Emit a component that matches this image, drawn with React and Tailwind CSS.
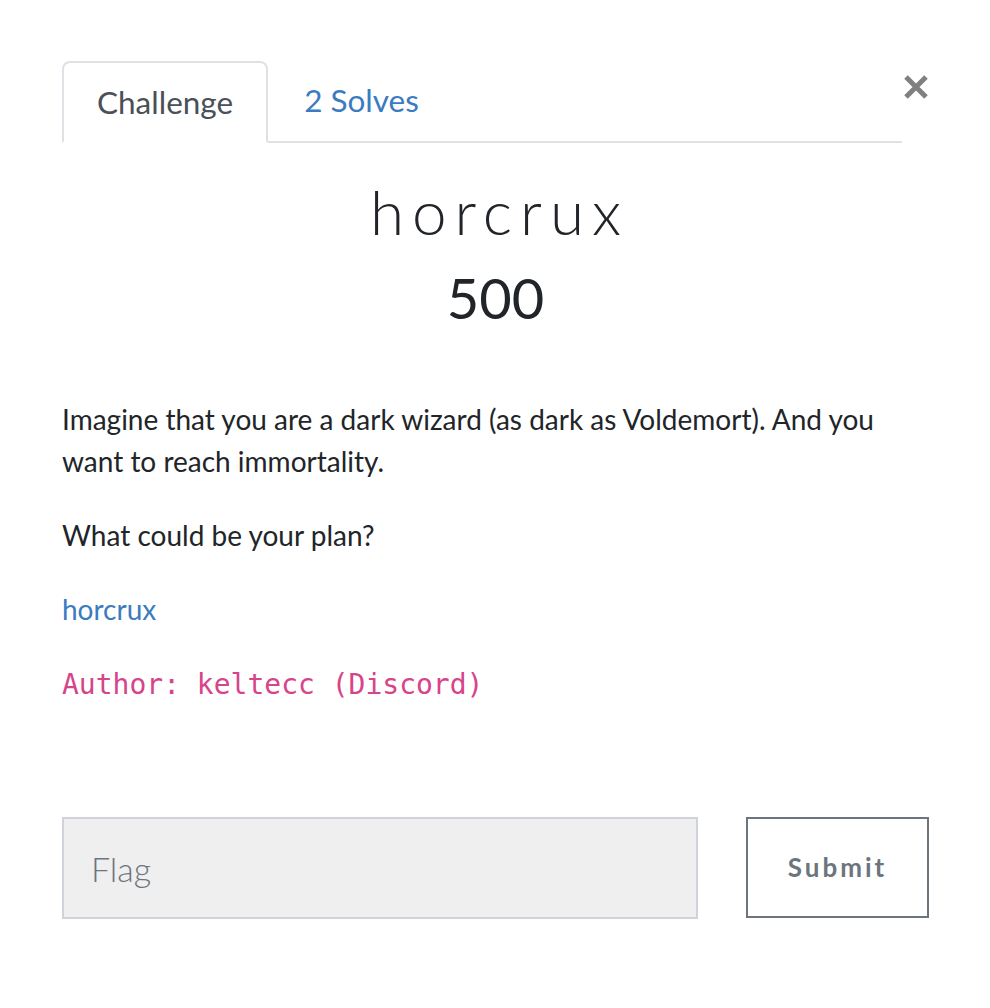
export default function App() {
  return (
    <div className="min-h-[1008px] bg-white pl-[62px] pr-[61px] pt-[61px] text-[#212529] font-['Lato','Noto_Sans',sans-serif]">
      <div className="flex items-start">
        <nav className="flex flex-1 border-b-2 border-[#dee2e6]">
          <span className="-mb-[2px] rounded-t-[8px] border-2 border-b-white border-[#dee2e6] bg-white px-[33px] text-[31.5px] leading-[78px] text-[#495057]">
            Challenge
          </span>
          <a href="#" className="px-[36px] text-[31.5px] leading-[78px] text-[#3b7bbf]">
            2 Solves
          </a>
        </nav>
        <button className="mt-[14px] ml-[1px] flex h-[24px] w-[26px] items-center justify-center" aria-label="Close">
          <svg viewBox="0 0 26 24" className="h-[24px] w-[26px]">
            <path d="M3 2 L23 22 M23 2 L3 22" stroke="#808080" strokeWidth="5" />
          </svg>
        </button>
      </div>

      <h2 className="mt-[28px] pl-[8px] text-center text-[62px] font-light leading-[80px] tracking-[8px]">horcrux</h2>
      <h3 className="mt-[12px] text-center text-[56px] leading-[70px]">500</h3>

      <div className="mt-[65px] flex flex-col gap-[32px] text-[28px] leading-[42px]">
        <p>Imagine that you are a dark wizard (as dark as Voldemort). And you want to reach immortality.</p>
        <p>What could be your plan?</p>
        <p>
          <a href="#" className="text-[#3b7bbf]">horcrux</a>
        </p>
        <p>
          <code className="font-['DejaVu_Sans_Mono',monospace] text-[28px] text-[#d6448a]">Author: keltecc (Discord)</code>
        </p>
      </div>

      <div className="mt-[111px] flex gap-[48px]">
        <input
          placeholder="Flag"
          className="h-[102px] w-[636px] shrink-0 border-2 border-[#ced4da] bg-[#efefef] pl-[27px] text-[34px] font-light outline-none placeholder:text-[#6c757d]"
        />
        <button className="h-[101px] w-[183px] shrink-0 border-2 border-[#6c757d] bg-white text-[26px] font-bold tracking-[3px] text-[#6c757d]">
          Submit
        </button>
      </div>
    </div>
  );
}
